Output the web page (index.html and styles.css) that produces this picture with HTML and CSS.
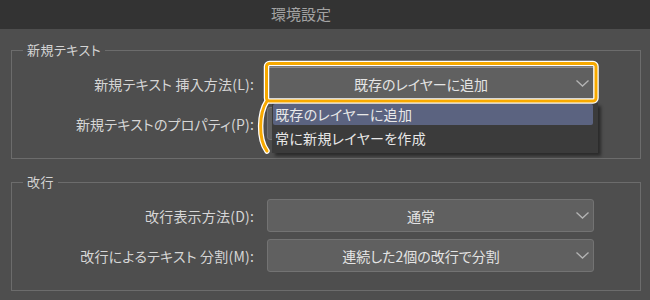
FILE: index.html
```html
<!DOCTYPE html>
<html lang="ja">
<head>
  <meta charset="UTF-8" />
  <meta name="viewport" content="width=device-width, initial-scale=1" />
  <title>環境設定</title>
  <link rel="stylesheet" href="styles.css">
</head>
<body>

<div class="window">
  <div class="titlebar">環境設定</div>

  <div class="content">
    <fieldset class="group group-text">
      <legend>新規テキスト</legend>
      <div class="row">
        <label>新規テキスト 挿入方法(L):</label>
        <div class="select focused">
          <span class="value">既存のレイヤーに追加</span>
          <svg class="chevron" width="13" height="7" viewBox="0 0 13 7"><path d="M0.5 0.5 L6.5 6 L12.5 0.5" /></svg>
        </div>
      </div>
      <div class="row">
        <label>新規テキストのプロパティ(P):</label>
        <!-- covered by the open list below -->
        <div class="select">
          <span class="value"></span>
        </div>
      </div>
    </fieldset>

    <fieldset class="group">
      <legend>改行</legend>
      <div class="row">
        <label>改行表示方法(D):</label>
        <div class="select">
          <span class="value">通常</span>
          <svg class="chevron" width="13" height="7" viewBox="0 0 13 7"><path d="M0.5 0.5 L6.5 6 L12.5 0.5" /></svg>
        </div>
      </div>
      <div class="row">
        <label>改行によるテキスト 分割(M):</label>
        <div class="select">
          <span class="value">連続した2個の改行で分割</span>
          <svg class="chevron" width="13" height="7" viewBox="0 0 13 7"><path d="M0.5 0.5 L6.5 6 L12.5 0.5" /></svg>
        </div>
      </div>
    </fieldset>
  </div>

  <!-- open dropdown list of the first select -->
  <ul class="popup">
    <li class="selected">既存のレイヤーに追加</li>
    <li>常に新規レイヤーを作成</li>
  </ul>

  <!-- orange annotation around the focused select -->
  <svg class="callout" width="650" height="300" viewBox="0 0 650 300">
    <g class="outline">
      <rect x="266.5" y="63.5" width="329.5" height="37.5" rx="3" />
      <path d="M267 101 C259 113, 258 139, 267 151" />
    </g>
    <g class="mark">
      <rect x="266.5" y="63.5" width="329.5" height="37.5" rx="3" />
      <path d="M267 101 C259 113, 258 139, 267 151" />
    </g>
  </svg>
</div>

</body>
</html>
```

FILE: styles.css
```css
body {
  margin: 0;
  background: #4e4e4e;
  font-family: "Noto Sans CJK JP", "Noto Sans", sans-serif;
  color: #d8d8d8;
}
.window {
  position: relative;
  width: 650px;
  height: 300px;
  overflow: hidden;
  background: #4e4e4e;
}
.titlebar {
  height: 29px;
  line-height: 28px;
  padding-right: 48px;
  background: #333333;
  color: #a3a3a3;
  text-align: center;
  font-size: 15px;
}
.content {
  padding-top: 12px;
}
.group {
  margin: 0 9px 0 11px;
  padding: 8px 46px 18px 0;
  border: 1px solid #6c6c6c;
  display: flex;
  flex-direction: column;
  gap: 7px;
}
.group + .group {
  margin-top: 14px;
}
.group legend {
  margin-left: 11px;
  padding: 0 4px;
  font-size: 13px;
  line-height: 18px;
  color: #d4d4d4;
  font-feature-settings: "palt";
  letter-spacing: 0.5px;
}
.row {
  display: grid;
  grid-template-columns: 1fr 327px;
  column-gap: 13px;
  align-items: center;
}
.row label {
  text-align: right;
  font-size: 14px;
  font-feature-settings: "palt";
  letter-spacing: 0.2px;
  color: #d6d6d6;
  white-space: nowrap;
}
.select {
  height: 33px;
  box-sizing: border-box;
  border: 1px solid #737373;
  border-radius: 3px;
  background: #606060;
  display: flex;
  align-items: center;
  padding: 0 4px 0 0;
}
.select.focused {
  border-color: #8c8c8c;
  border-radius: 0;
}
.select .value {
  flex: 1;
  text-align: center;
  font-size: 14px;
  font-feature-settings: "palt";
  color: #e4e4e4;
  padding-left: 4px;
}
.chevron {
  margin-left: 6px;
}
.chevron path {
  fill: none;
  stroke: #b4b4b4;
  stroke-width: 1.3;
}
.popup {
  position: absolute;
  left: 272px;
  top: 103px;
  width: 326px;
  height: 50px;
  margin: 0;
  padding: 1px;
  box-sizing: border-box;
  list-style: none;
  background: #3b3b3b;
  box-shadow: 3px 3px 3px rgba(0, 0, 0, 0.45);
}
.popup li {
  padding-left: 2px;
  font-size: 14px;
  font-feature-settings: "palt";
  letter-spacing: 0.3px;
  color: #e8e8e8;
  height: 25px;
  line-height: 27px;
}
.popup li.selected {
  height: 21px;
  line-height: 20px;
  margin-right: 4px;
  border-radius: 2px;
  background: #5b6380;
}
.callout {
  position: absolute;
  left: 0;
  top: 0;
  pointer-events: none;
}
.callout rect,
.callout path {
  fill: none;
  stroke-linecap: round;
}
.callout .outline rect,
.callout .outline path {
  stroke: #ffffff;
  stroke-width: 5.5;
}
.callout .mark rect,
.callout .mark path {
  stroke: #f7a900;
  stroke-width: 3;
}
```
